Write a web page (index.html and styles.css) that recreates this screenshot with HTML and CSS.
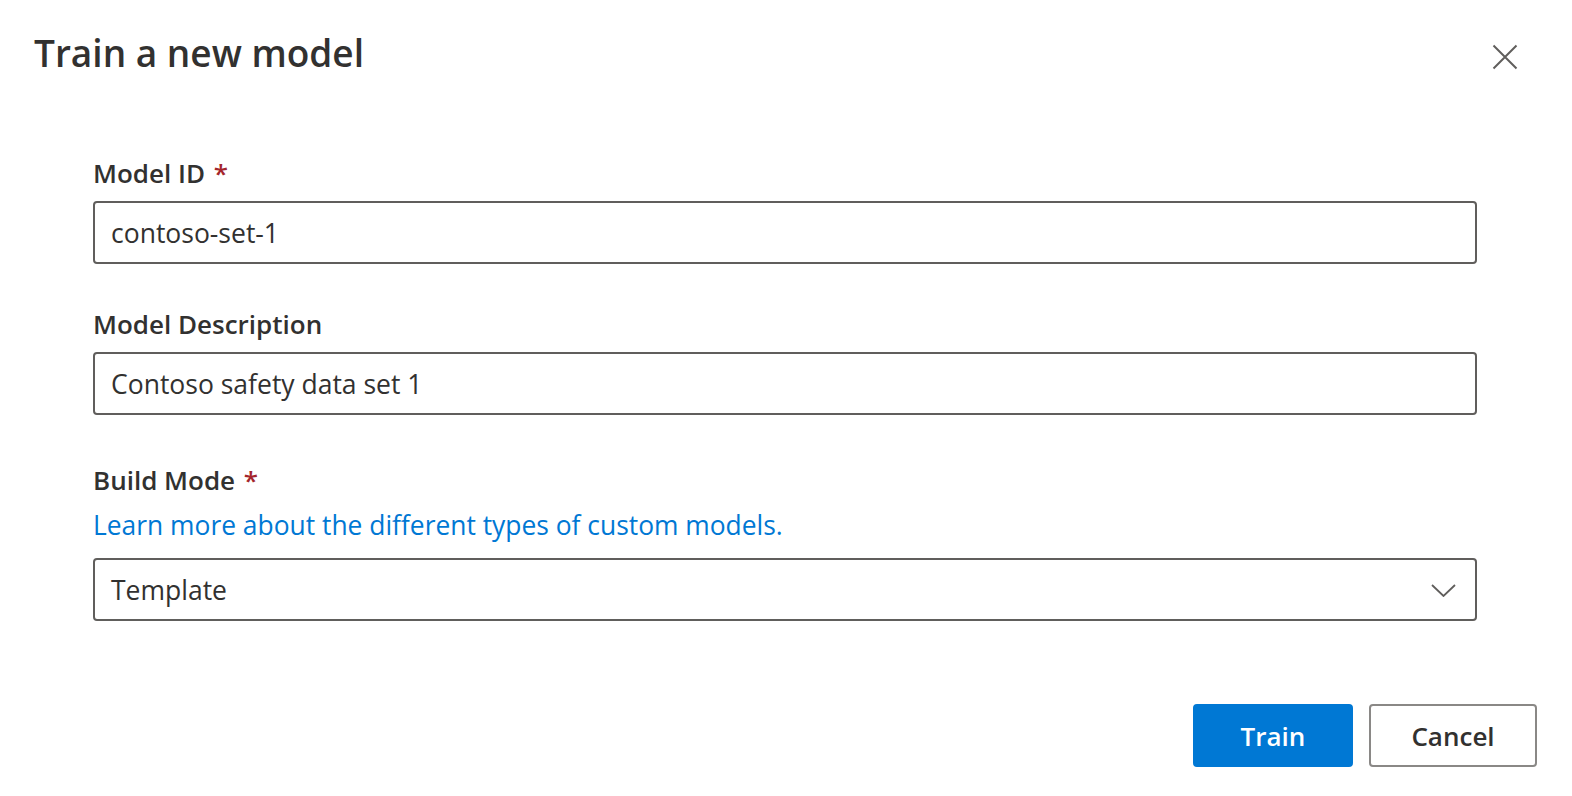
FILE: index.html
```html
<!DOCTYPE html>
<html lang="en">
<head>
<meta charset="utf-8">
<title>Train a new model</title>
<link rel="stylesheet" href="styles.css">
</head>
<body>
<div class="dialog">
  <div class="dialog-header">
    <h1 class="dialog-title">Train a new model</h1>
    <button class="close-btn" aria-label="Close">
      <svg width="26" height="26" viewBox="0 0 26 26"><path d="M1.5 1.5 L24.5 24.5 M24.5 1.5 L1.5 24.5" stroke="#605e5c" stroke-width="2" fill="none"/></svg>
    </button>
  </div>
  <div class="dialog-body">
    <div class="field field-first">
      <label class="label">Model ID <span class="req">*</span></label>
      <div class="input"><span class="input-text">contoso-set-1</span></div>
    </div>
    <div class="field field-second">
      <label class="label">Model Description</label>
      <div class="input"><span class="input-text">Contoso safety data set 1</span></div>
    </div>
    <div class="field field-third">
      <label class="label">Build Mode <span class="req">*</span></label>
      <a class="link" href="#">Learn more about the different types of custom models.</a>
      <div class="input dropdown">
        <span class="input-text">Template</span>
        <svg class="chevron" width="25" height="13" viewBox="0 0 25 13"><path d="M1 1 L12.5 12 L24 1" stroke="#605e5c" stroke-width="1.8" fill="none"/></svg>
      </div>
    </div>
  </div>
  <div class="dialog-footer">
    <button class="btn btn-primary">Train</button>
    <button class="btn btn-default">Cancel</button>
  </div>
</div>
</body>
</html>
```

FILE: styles.css
```css
* { box-sizing: border-box; }
html, body {
  margin: 0;
  padding: 0;
  background: #ffffff;
}
body {
  font-family: "Open Sans", "Noto Sans", sans-serif;
  color: #323130;
  width: 1572px;
  height: 796px;
  overflow: hidden;
}
.dialog {
  display: flex;
  flex-direction: column;
}
.dialog-header {
  display: flex;
  justify-content: space-between;
  align-items: flex-start;
  padding: 28px 54px 0 34px;
}
.dialog-title {
  margin: 0;
  font-size: 37px;
  font-weight: 600;
  line-height: 50px;
  color: #323130;
}
.close-btn {
  margin-top: 16px;
  width: 26px;
  height: 26px;
  padding: 0;
  border: none;
  background: transparent;
  display: flex;
}
.dialog-body {
  display: flex;
  flex-direction: column;
  padding: 0 95px 0 93px;
}
.field {
  display: flex;
  flex-direction: column;
}
.field-first { margin-top: 75px; }
.field-second { margin-top: 40px; }
.field-third { margin-top: 45px; }
.label {
  font-size: 26px;
  font-weight: 600;
  line-height: 40px;
  margin-bottom: 8px;
}
.field-third .label { margin-bottom: 5px; }
.req {
  color: #a4262c;
  margin-left: 2px;
}
.link {
  font-size: 26.4px;
  line-height: 40px;
  color: #0078d4;
  text-decoration: none;
  margin-bottom: 13px;
  align-self: flex-start;
}
.input {
  height: 63px;
  border: 2px solid #605e5c;
  border-radius: 4px;
  display: flex;
  align-items: center;
  padding: 1px 19px 0 16px;
}
.input-text {
  font-size: 26.5px;
  line-height: 40px;
  color: #323130;
}
.dropdown {
  justify-content: space-between;
}
.chevron { display: block; }
.dialog-footer {
  display: flex;
  justify-content: flex-end;
  gap: 16px;
  padding: 83px 35px 0 0;
}
.btn {
  height: 63px;
  min-width: 160px;
  padding: 0 30px;
  border-radius: 4px;
  font-family: "Open Sans", "Noto Sans", sans-serif;
  font-size: 26px;
  font-weight: 600;
}
.btn-primary {
  background: #0078d4;
  border: 2px solid #0078d4;
  color: #ffffff;
}
.btn-default {
  background: #ffffff;
  border: 2px solid #8a8886;
  color: #323130;
  min-width: 168px;
}
```
